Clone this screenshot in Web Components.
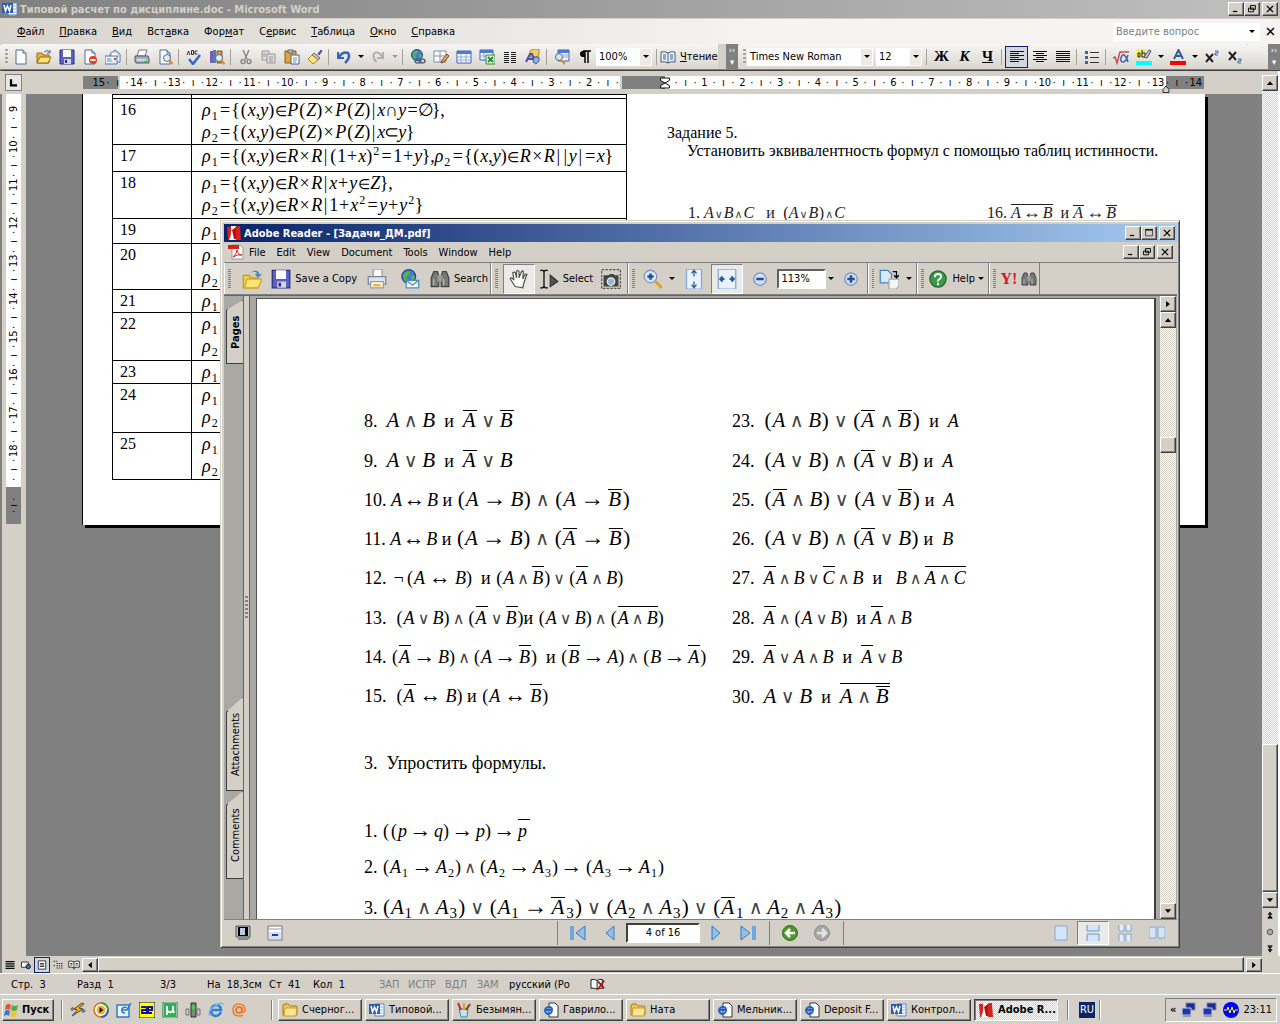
<!DOCTYPE html>
<html lang="ru">
<head>
<meta charset="utf-8">
<title>Типовой расчет по дисциплине.doc - Microsoft Word</title>
<style>
    body {
        margin: 0;
        height: 100vh;
        display: flex;
        flex-direction: column;
        overflow: hidden;
        background: #808080;
        color: #000;
        font: 11px "DejaVu Sans Condensed", "DejaVu Sans", sans-serif;
        --face: #d4d0c8;
    }
    word-window { flex: 1; min-height: 0; }
</style>
</head>
<body>
<word-window></word-window>
<task-bar>
    <task-button icon="folder">Счерног...</task-button>
    <task-button icon="word">Типовой...</task-button>
    <task-button icon="paint">Безымян...</task-button>
    <task-button icon="iepage">Гаврило...</task-button>
    <task-button icon="folder">Ната</task-button>
    <task-button icon="iepage">Мельник...</task-button>
    <task-button icon="iepage">Deposit F...</task-button>
    <task-button icon="word">Контрол...</task-button>
    <task-button icon="adobe" active>Adobe R...</task-button>
</task-bar>
<reader-window></reader-window>

<script>
// every icon sits on a 16 x 16 grid
const sheet = '<path d="M3 1h7l3 3v11H3z" fill="#fff" stroke="#4a6a98"/><path d="M10 1v3h3" fill="#cfe0f5" stroke="#4a6a98"/>';
const lens = '<circle cx="10" cy="9" r="3.5" fill="#d8efff" stroke="#667"/><path d="M12.500 11.500l3 3.500" stroke="#d98c2b" stroke-width="2"/>';
const globe = '<circle cx="7" cy="6" r="5.500" fill="#3f7fc8" stroke="#1d4c85"/><path d="M3 4q2-3 5-2l-1 3-2 1 1 3-2 1q-2-3-1-6zM9 5l3 1-1 3-2-1z" fill="#58b548"/>';
const icons = {
    word: '<path d="M6 2h9v12H6z" fill="#fff" stroke="#5b84c4"/><path d="M11 5h3M11 8h3M8 14h6M11 11h3" stroke="#8fb0e0"/><path d="M0 2h11v10H0z" fill="#2a5cb0"/><path d="M2 4l1.500 6 2-5 2 5L9 4" fill="none" stroke="#fff" stroke-width="1.500"/>',
    new: sheet,
    open: '<path d="M1 14V4h5l1 2h6v8z" fill="#e7b13c" stroke="#9a6b13"/><path d="M1 14l3-6h11l-3 6z" fill="#ffdf7a" stroke="#9a6b13"/><path d="M8 3q3-3 6 0m0-2v3h-3" fill="none" stroke="#3b6fb6"/>',
    ropen: '<path d="M1 15V5h5l1 2h6v8z" fill="#f6cf48" stroke="#c69a1c"/><path d="M2 15l2-7h12l-3 7z" fill="#ffe474" stroke="#d0a52a"/><path d="M7 3q5-4 7 1h2l-3 3-3-3h2q-1-3-5-1z" fill="#4d88bf"/>',
    save: '<path d="M1 1h14v14H1z" fill="#5a63c2" stroke="#2b2f80"/><path d="M4 1h8v7H4z" fill="#fff"/><path d="M5 10h7v5H5z" fill="#cfd3ee"/><path d="M6 11h2v3H6z" fill="#2b2f80"/>',
    perm: sheet + '<circle cx="11" cy="11" r="4" fill="#e0401f"/><path d="M8.500 11h5" stroke="#fff" stroke-width="2"/>',
    mail: '<path d="M5 5l5-4 5 4v8H5z" fill="#fff" stroke="#4f78b5"/><path d="M6 3h7v5H6z" fill="#fff" stroke="#9a9a9a"/><path d="M0 7h12v8H0z" fill="#e7f1fc" stroke="#4f78b5"/><path d="M2 10h4M2 12h5" stroke="#6b8cc0"/><path d="M9 9h2v2H9z" fill="#d8452e"/>',
    print: '<path d="M5 1h8l-2 6H3z" fill="#fff" stroke="#777"/><path d="M1 7h13l1 3v4H2l-1-2z" fill="#a7b1c0" stroke="#4e5664"/><path d="M3 11h9" stroke="#fff"/><path d="M10 12h3v2h-3z" fill="#3db53a"/>',
    preview: sheet + lens,
    spell: '<path d="M1 6l1.500-4L4 6M5.500 1.500v4h2v-4zM11.500 2H9v3h2.500" fill="none" stroke="#333"/><path d="M3 10l4 5 7-9" fill="none" stroke="#3569c8" stroke-width="2.500"/>',
    research: '<path d="M1 2h3v12H1z" fill="#7a5bb5"/><path d="M4 1h3v13H4z" fill="#4b7dc9"/><path d="M8 2h5v12H8z" fill="#c79b55" stroke="#7d5a22"/>' + lens,
    cut: '<path d="M5 1l4 9M11 1L7 10" stroke="#8a8a8a" stroke-width="1.500"/><circle cx="5" cy="12.500" r="2" fill="none" stroke="#8a8a8a" stroke-width="1.500"/><circle cx="11" cy="12.500" r="2" fill="none" stroke="#8a8a8a" stroke-width="1.500"/>',
    copy: '<path d="M1 2h7v9H1z" fill="#ddd" stroke="#999"/><path d="M6 5h8v9H6z" fill="#ddd" stroke="#999"/><path d="M8 8h4M8 10h4M8 12h4M2 5h3M2 7h3" stroke="#999"/>',
    paste: '<path d="M1 2h11v12H1z" fill="#e2a33b" stroke="#8f5f17"/><path d="M4 1h5v3H4z" fill="#b9bec8" stroke="#666"/><path d="M7 6h8v9H7z" fill="#fff" stroke="#44629a"/><path d="M9 9h4M9 11h4M9 13h3" stroke="#6f90cc"/>',
    brush: '<path d="M11 5l3-4 1 1-3 4z" fill="#6a5acd" stroke="#4a3f9a"/><path d="M7 4l6 5-2 2-6-5z" fill="#c0c6d0" stroke="#666"/><path d="M5 6l6 5-5 4-5-5z" fill="#ffe680" stroke="#a8841f"/>',
    undo: '<path d="M2 3v6h6" fill="none" stroke="#3564b8" stroke-width="2"/><path d="M3 8q4-6 9-4 3 4-3 10" fill="none" stroke="#3564b8" stroke-width="2.500"/>',
    redo: '<path d="M13 3v6H7" fill="none" stroke="#b0b0b0" stroke-width="2"/><path d="M12.500 8q-4-6-8-4-3 4 2 9" fill="none" stroke="#b0b0b0" stroke-width="2"/>',
    link: globe + '<path d="M5 12q0-2 3-2t3 2-3 2-3-2zM9 12q0-2 3-2t3 2-3 2-3-2z" fill="none" stroke="#56657e" stroke-width="1.500"/>',
    borders: '<path d="M1 2h12v11H1zM7 2v11M1 7h12" fill="#fff" stroke="#7d8fb0"/><path d="M8 14l1-3 5-6 2 2-5 6z" fill="#e8a34a" stroke="#7a4a1a"/>',
    table: '<path d="M1 2h14v12H1z" fill="#fff" stroke="#3a62b0"/><path d="M1 2h14v3H1z" fill="#4a7bd0"/><path d="M1 8h14M1 11h14M5 5v9M10 5v9" stroke="#88a6dc"/>',
    excel: '<path d="M1 1h13v10H1z" fill="#fff" stroke="#3a62b0"/><path d="M1 1h13v3H1z" fill="#4a7bd0"/><path d="M1 7h13M5 4v7" stroke="#88a6dc"/><path d="M7 6h9v9H7z" fill="#e9f6e6" stroke="#2b8a32"/><path d="M9 8l5 5M14 8l-5 5" stroke="#2b8a32" stroke-width="2"/>',
    columns: '<path d="M2 3.500h5M2 5.500h5M2 7.500h5M2 9.500h5M2 11.500h5M2 13.500h5M9 3.500h5M9 5.500h5M9 7.500h5M9 9.500h5M9 11.500h5M9 13.500h5" stroke="#222"/>',
    draw: '<path d="M5 2l3-2h6v6l-3 2H5z" fill="#f5cf62" stroke="#b08420"/><path d="M1 13L5 5h2l3 8M3 10h5" fill="none" stroke="#4a4fb8" stroke-width="2"/><path d="M9 8h5v4l-3 3-3-2z" fill="#8fb1e8" stroke="#3c5b9a"/>',
    docmap: '<path d="M4 1h11v11H4z" fill="#eaf3ff" stroke="#3a62b0"/><path d="M4 1h11v3H4z" fill="#4a7bd0"/><path d="M9 6h5M9 8h5" stroke="#9ab"/><circle cx="5" cy="8" r="3.500" fill="#cdeafa" stroke="#667"/><path d="M7 11l4 4" stroke="#d98c2b" stroke-width="2"/>',
    para: '<path d="M8 2v12M11 2v12M6 2h8" stroke="#000" stroke-width="1.500"/><path d="M8 2H6q-3 0-3 3t3 3h2z"/>',
    book: '<path d="M1 3q4-1 7 1 3-2 7-1v10q-4-1-7 1-3-2-7-1z" fill="#eef4fb" stroke="#3c5b88"/><path d="M8 4v10M3 6h3M3 8h3M3 10h3M10 6h3M10 8h3M10 10h3" stroke="#3c5b88"/>',
    left: '<path d="M1 2.500h14M1 4.500h9M1 6.500h14M1 8.500h9M1 10.500h14M1 12.500h9" stroke="#111"/>',
    center: '<path d="M1 2.500h14M4 4.500h8M1 6.500h14M4 8.500h8M1 10.500h14M4 12.500h8" stroke="#111"/>',
    justify: '<path d="M1 2.500h14M1 4.500h14M1 6.500h14M1 8.500h14M1 10.500h14M1 12.500h14" stroke="#111"/>',
    bullets: '<path d="M6 3.500h9M6 8.500h9M6 13.500h9" stroke="#333"/><path d="M1 2h3v3H1zM1 7h3v3H1zM1 12h3v3H1z" fill="#3a62b0"/>',
    root: '<path d="M0 9l2-1 2 6L7 3h9" fill="none" stroke="#d04848" stroke-width="1.500"/><path d="M15 6q-2 7-5 7t-2-4 3-3 4 7" fill="none" stroke="#3564b8" stroke-width="1.500"/>',
    marker: '<path d="M0 0h10v9H0z" fill="#f4f06a"/><path d="M2 4h2v4H2zM6 1v7h3V4H6" fill="none" stroke="#222"/><path d="M8 8l5-7 2 1-4 7z" fill="#b8c4d8" stroke="#556"/><path d="M0 12h16v4H0z" fill="#0ff"/>',
    color: '<path d="M4 10L8.500 1 13 10M6 7h5" fill="none" stroke="#3a5a9a" stroke-width="2"/><path d="M0 12h16v4H0z" fill="#f00"/>',
    sup: '<path d="M2 5l7 8M9 5l-7 8" stroke="#222" stroke-width="2"/><path d="M11 2h3v2h-3v2h3" fill="none" stroke="#3564b8"/>',
    sub: '<path d="M2 3l7 8M9 3l-7 8" stroke="#222" stroke-width="2"/><path d="M11 10h3v2h-3v2h3" fill="none" stroke="#3564b8"/>',
    adobe: '<path d="M1 2l13-1 1 14H2z" fill="#d8201c"/><path d="M5 1h5L8 9l2 6H3q3-6 2-14z" fill="#fff"/><path d="M6 5l4-3v12H8z" fill="#b01512"/>',
    pdf: '<path d="M4 1h8l3 3v11H4z" fill="#fff" stroke="#999"/><path d="M0 1h11v4H0z" fill="#d8201c"/><path d="M5 13q4-4 4-7 1 5 5 5-5-1-9 2z" fill="none" stroke="#d8201c"/>',
    folder: '<path d="M1 13V4q0-2 2-2h3l2 2h6q1 0 1 1v8z" fill="#f3c84c" stroke="#a87a15"/><path d="M3 6h12l-1 8H2z" fill="#ffe692" stroke="#c79a2a"/>',
    rprint: '<path d="M5 0h7v6H5z" fill="#fff" stroke="#99a"/><path d="M1 6h14v6H1z" fill="#dfe4ec" stroke="#7c8595"/><path d="M3 10h10v5H3z" fill="#fff" stroke="#99a"/><path d="M5 12h6v2H5z" fill="#f0b637"/>',
    rmail: globe + '<path d="M5 9h10v6H5z" fill="#f6fbff" stroke="#4f8cc0"/><path d="M5 9l5 4 5-4" fill="none" stroke="#4f8cc0"/>',
    binoc: '<path d="M3 2h3l1 4v8H1V7zM10 2h3l2 5v7H9V6z" fill="#777" stroke="#444"/><path d="M6 5h4v5H6z" fill="#999"/><path d="M3 8v5M11 8v5" stroke="#bbb"/>',
    hand: '<path d="M5 14L1 8q1-2 3 1L3 3q1-1 2 0l1 4V2q1-2 2 0v5l2-5q1-1 1.500 0L11 8l2-4q2 0 1 1l-2 6-1 4z" fill="#fff" stroke="#555"/>',
    select: '<path d="M1 1h2l1 1 1-1h2M4 2v12M1 15h2l1-1 1 1h2" fill="none" stroke="#000"/><path d="M9 5l6 5-6 4z" fill="#555" stroke="#333"/>',
    camera: '<path d="M.500.500h15v15H.500z" fill="none" stroke="#555" stroke-dasharray="2 1"/><path d="M3 5h3l1-1h3l1 1h3v9H2V5z" fill="#444"/><circle cx="8" cy="10" r="3" fill="#9ab4cc" stroke="#eee"/>',
    zoomin: '<circle cx="6" cy="6" r="5" fill="#d6e8fb" stroke="#8093b8"/><path d="M6 3.500v5M3.500 6h5" stroke="#1f4f9a" stroke-width="2"/><path d="M10 10l5 5" stroke="#dfa032" stroke-width="2.500"/>',
    fith: '<path d="M2 0h12v16H2z" fill="#e8f3ff" stroke="#7fa8d8"/><path d="M8 1v5M8 10v5M6 3.500L8 1l2 2.500M6 12.500L8 15l2-2.500" fill="none" stroke="#2a5b9a"/>',
    fitw: '<path d="M1 0h14v16H1z" fill="#e8f3ff" stroke="#7fa8d8"/><path d="M2 8h4M10 8h4M4.500 6l-2 2 2 2M11.500 6l2 2-2 2" fill="none" stroke="#2a5b9a" stroke-width="1.500"/>',
    minus: '<circle cx="8" cy="8" r="5" fill="#cfe0f7" stroke="#7f8fb5"/><path d="M5 8h6" stroke="#1f4f9a" stroke-width="2"/>',
    plus: '<circle cx="8" cy="8" r="5" fill="#cfe0f7" stroke="#7f8fb5"/><path d="M5 8h6M8 5v6" stroke="#1f4f9a" stroke-width="2"/>',
    rotate: '<path d="M1 1h6l3 3v7H1z" fill="#d8e9fb" stroke="#4f7fc0"/><path d="M8 8h8v5l-2 3H8z" fill="#f5f5f5" stroke="#aaa"/><path d="M11 2h3v5M12 5l2 2 2-2" fill="none" stroke="#000"/>',
    help: '<circle cx="8" cy="8" r="6.500" fill="#3a9a4a" stroke="#23652d"/><path d="M5.500 6.500q0-2.500 2.500-2.500t2.500 2Q10.500 7.500 8 9v1M8 11v2" fill="none" stroke="#fff" stroke-width="1.500"/>',
    play: '<circle cx="8" cy="8" r="7" fill="#fff" stroke="#e06a1c" stroke-width="1.500"/><path d="M8 1a7 7 0 0 1 7 7" fill="none" stroke="#3fa047" stroke-width="2"/><path d="M15 8a7 7 0 0 1-7 7" fill="none" stroke="#2c62c8" stroke-width="2"/><circle cx="8" cy="8" r="4.500" fill="#f0b030"/><path d="M6.500 5l4 3-4 3z" fill="#123"/>',
    winamp: '<path d="M12 1l-8 6 3 1-5 6 11-7-4-1 5-4z" fill="#f8a81c" stroke="#444"/><path d="M1 8l3-2M12 10l3-2" stroke="#777" stroke-width="3"/>',
    desk: '<path d="M1 3h12v12H1z" fill="#e8f4ff" stroke="#2f7ac8" stroke-width="1.500"/><path d="M11 6q-3-2-5 1-1 4 3 4M6 8h5l4-7" fill="none" stroke="#2f7ac8" stroke-width="1.500"/>',
    ae: '<path d="M0 0h16v16H0z" fill="#ff0" stroke="#000080"/><path d="M2 5h4q2 0 2 2v4H3V8h10V5H9v6h4" fill="none" stroke="#1010a0" stroke-width="2"/>',
    mu: '<path d="M1 0h14v16H1z" fill="#fff" stroke="#197a3c"/><path d="M2 1h12v14H2z" fill="#2fae5a"/><path d="M5 4v9M5 9q5 3 6-1V4M11 8l1 3" fill="none" stroke="#fff" stroke-width="2"/>',
    phone: '<path d="M6 1h5v14H6z" fill="#7c8a80" stroke="#333"/><path d="M7 4h3v3H7z" fill="#52d24a"/><path d="M1 7h3v6H1zM12 7h3v6h-3z" fill="#c5ccd0" stroke="#777"/>',
    ie: '<path d="M13 10q-2 4-6 4-4-1-4-6 1-5 6-5 4 1 4 5H4" fill="none" stroke="#2c7fd8" stroke-width="2.500"/><path d="M2 14Q-1 9 7 4q8-5 8-1" fill="none" stroke="#6fb6f2" stroke-width="1.500"/>',
    at: '<circle cx="8" cy="8" r="3" fill="none" stroke="#f07a28" stroke-width="2"/><path d="M11 5v5q3 1 3-2 0-6-6-6-6 0-6 6t6 6q3 0 4-1" fill="none" stroke="#f07a28" stroke-width="1.500"/>',
    iepage: '<path d="M6 1h6l3 3v11H6z" fill="#fff" stroke="#333"/><path d="M9 9q-1 3-4 3-3-1-3-4 1-3 4-3 3 0 3 3H3" fill="none" stroke="#2463c8" stroke-width="2"/>',
    paint: '<path d="M3 7h9l-1 8H5z" fill="#bfe6ee" stroke="#3a8a99"/><path d="M5 8L2 1" stroke="#d02a20" stroke-width="2"/><path d="M8 8V1" stroke="#e0a020" stroke-width="2"/><path d="M10 8l4-6" stroke="#8a3a1a" stroke-width="2"/>',
    flag: '<path d="M2 3q3-2 5 0L6 8Q4 6 1 8z" fill="#e8502a"/><path d="M8 3q3 2 6 0l-1 5q-3 2-6 0z" fill="#4fae3c"/><path d="M1 9q3-2 5 0l-1 5q-2-2-5 0z" fill="#3a78d8"/><path d="M7 9q3 2 6 0l-1 5q-3 2-6 0z" fill="#f7c22c"/>',
    net: '<path d="M5 1h9v7H5z" fill="#1a2f9a" stroke="#889"/><path d="M1 6h9v7H1z" fill="#2038b0" stroke="#ccd"/><path d="M2 14h8" stroke="#99a" stroke-width="2"/>',
    wave: '<circle cx="8" cy="8" r="8" fill="#00f"/><path d="M1 8h3l1-3 2 6 2-6 2 6 1-3h3" fill="none" stroke="#ff0"/>',
    monitor: '<path d="M1 1h14v11H1z" fill="#bbb" stroke="#555"/><path d="M3 2h10v9H3z" fill="#000"/><path d="M5 3h5v7H5z" fill="#b8cbe0"/><path d="M3 14h10" stroke="#888" stroke-width="2"/><path d="M13 12h2v2h-2z" fill="#2c2"/>',
    collapse: '<path d="M1 1h14v14H1z" fill="#fff" stroke="#778"/><path d="M1 4h14" stroke="#99a"/><path d="M2 7h12v7H2z" fill="#d6e0f2"/><path d="M5 10h6" stroke="#1f3f9a" stroke-width="2"/>',
    first: '<path d="M0 1h4v14H0z" fill="#6fa8dc"/><path d="M15 1v14L6 8z" fill="#8fc0ee" stroke="#3d78b4"/>',
    prev: '<path d="M12 1v14L4 8z" fill="#8fc0ee" stroke="#3d78b4"/>',
    next: '<path d="M4 1v14l8-7z" fill="#8fc0ee" stroke="#3d78b4"/>',
    last: '<path d="M12 1h4v14h-4z" fill="#6fa8dc"/><path d="M1 1v14l9-7z" fill="#8fc0ee" stroke="#3d78b4"/>',
    back: '<circle cx="8" cy="8" r="7.500" fill="#4f9a2c" stroke="#2f6a18"/><path d="M13 8H5M8 4L4 8l4 4" fill="none" stroke="#fff" stroke-width="2.500"/>',
    fwd: '<circle cx="8" cy="8" r="7.500" fill="#a8a8a8" stroke="#888"/><path d="M3 8h8M8 4l4 4-4 4" fill="none" stroke="#e4e4e4" stroke-width="2.500"/>',
    single: '<path d="M2 1h12v14H2z" fill="#d3e5fa" stroke="#86a8d4"/>',
    cont: '<path d="M2 0v6h12V0M2 16V9h12v7" fill="#d3e5fa" stroke="#6f93c4"/>',
    contface: '<path d="M2 0v6h5V0M9 0v6h5V0M2 16V9h5v7M9 16V9h5v7" fill="#e3effc" stroke="#86a8d4"/>',
    facing: '<path d="M0 2h7v11H0zM9 2h7v11H9z" fill="#d3e5fa" stroke="#86a8d4"/>',
    vnormal: '<path d="M2 3.500h12M2 6.500h12M2 9.500h12M2 12.500h12" stroke="#000" stroke-width="1.500"/>',
    vweb: '<path d="M2 4h9v7H2z" fill="#fff" stroke="#000"/><circle cx="11" cy="10" r="3" fill="#37a" stroke="#000"/>',
    vprint: '<path d="M3 2.500h10v11H3z" fill="#fff" stroke="#000"/><path d="M5 6h6M5 8h6M5 10h6" stroke="#000"/>',
    voutline: '<path d="M2 3h6M6 6h8M2 9h2M6 9h8M6 12h8" stroke="#000" stroke-dasharray="2 1"/>',
    vread: '<path d="M1 3q4-1 7 1 3-2 7-1v8q-4-1-7 1-3-2-7-1z" fill="#fff" stroke="#000"/><path d="M8 4v10M3 6h3M10 6h3M3 8h3M10 8h3" stroke="#000"/>',
    spellbook: '<path d="M0 3q4-1 7 1 2-2 6-1v10q-4-1-6 1-3-2-7-1z" fill="#fff" stroke="#000"/><path d="M7 4v10" stroke="#000"/><path d="M8 5l7 8M15 4l-7 10" stroke="#b01010" stroke-width="2"/>',
    min: '<path d="M3 12h7" stroke="#000" stroke-width="2"/>',
    max: '<path d="M2.500 2.500h11v10h-11z" fill="none" stroke="#000"/><path d="M2 3h12" stroke="#000" stroke-width="2"/>',
    restore: '<path d="M5.500 2.500h8v6h-8zM2.500 6.500h8v6h-8z" fill="#d4d0c8" stroke="#000" stroke-width="1.500"/>',
    close: '<path d="M3 3l10 10M13 3L3 13" stroke="#000" stroke-width="2"/>',
    up: '<path d="M8 5l5 6H3z"/>', down: '<path d="M8 11l5-6H3z"/>',
    lt: '<path d="M5 8l6-5v10z"/>', rt: '<path d="M11 8L5 3v10z"/>',
    twoup: '<path d="M8 1l4 5H4zM8 6l4 5H4z"/><path d="M4 12h8" stroke="#000"/>',
    twodown: '<path d="M8 15l4-5H4zM8 10l4-5H4z"/><path d="M4 4h8" stroke="#000"/>',
    dot: '<circle cx="8" cy="8" r="4.500" fill="#aaa" stroke="#222"/>',
    tabstop: '<path d="M4 3v8h8" fill="none" stroke="#000" stroke-width="3"/>',
    indent: '<path d="M1 0h14v4L8 8l7 4v4H1v-4l7-4-7-4z" fill="#fff" stroke="#000" stroke-width="1.500"/>',
    margin: '<path d="M2 15V9l6-7 6 7v6z" fill="#d4d0c8" stroke="#000" stroke-width="1.500"/>'
};

const common = `
    * { box-sizing: border-box; }
    button, select, input {
        margin: 0; padding: 0; border: 0; background: none;
        font: inherit; color: inherit; border-radius: 0;
    }
    select { appearance: none; outline: none; }
    .row { display: flex; align-items: center; }
    .grow { flex: 1; min-width: 0; }
    .raised {
        background: var(--face);
        border: 1px solid; border-color: #fff #404040 #404040 #fff;
        box-shadow: inset -1px -1px #808080;
    }
    .track { background: repeating-conic-gradient(#fff 0 25%, #d4d0c8 0 50%) 0 0 / 2px 2px; }
`;

class UiIcon extends HTMLElement {
    constructor() {
        super();
        this.attachShadow({mode: 'open'});
    }
    connectedCallback() {
        this.shadowRoot.innerHTML = `
            <style>
                :host { display: block; flex: none; width: 16px; height: 16px; }
                svg { display: block; width: 100%; height: 100%; }
            </style>
            <svg viewBox="0 0 16 16" aria-hidden="true">${icons[this.getAttribute('name')] || ''}</svg>`;
    }
}
customElements.define('ui-icon', UiIcon);

// flat toolbar button; "drop" adds the little arrow, "pressed" and "sunken" the held-down looks
class ToolButton extends HTMLElement {
    constructor() {
        super();
        this.attachShadow({mode: 'open'});
    }
    connectedCallback() {
        const drop = this.hasAttribute('drop');
        this.shadowRoot.innerHTML = `
            <style>${common}
                :host { display: flex; flex: none; align-items: center; }
                button { display: flex; align-items: center; justify-content: center; gap: 4px; min-width: 23px; height: 22px; white-space: nowrap; }
                :host([size="big"]) button { min-width: 28px; height: 30px; }
                :host([size="big"]) ui-icon { width: 20px; height: 20px; }
                :host([size="foot"]) button { min-width: 32px; height: 24px; }
                :host([size="small"]) button { min-width: 16px; height: 16px; }
                :host([size="small"]) ui-icon { width: 12px; height: 12px; }
                :host([pressed]) button { background: #d2d6df; border: 1px solid #0a246a; }
                :host([sunken]) button { min-width: 32px; background: #eceae6; border: 1px solid; border-color: #808080 #fff #fff #808080; }
                :host .drop { min-width: 11px; width: 11px; }
                :host([size="big"]) .drop { min-width: 11px; }
                .drop i { border: 3px solid transparent; border-top-color: currentColor; border-bottom: 0; }
                :host([off]) .drop { color: #999; }
            </style>
            <button aria-label="${this.getAttribute('icon')}"><ui-icon name="${this.getAttribute('icon')}"></ui-icon><slot></slot></button>
            ${drop ? '<button class="drop" aria-label="more"><i></i></button>' : ''}`;
    }
}
customElements.define('tool-button', ToolButton);

// raised square used in title bars and scroll bars
class PushButton extends HTMLElement {
    constructor() {
        super();
        this.attachShadow({mode: 'open'});
    }
    connectedCallback() {
        this.shadowRoot.innerHTML = `
            <style>${common}
                :host { display: block; flex: none; }
                button { display: flex; align-items: center; justify-content: center; width: 16px; height: 14px; }
                :host([square]) button { height: 16px; }
                ui-icon { width: 10px; height: 10px; }
            </style>
            <button class="raised" aria-label="${this.getAttribute('icon')}"><ui-icon name="${this.getAttribute('icon')}"></ui-icon></button>`;
    }
}
customElements.define('push-button', PushButton);

class ComboBox extends HTMLElement {
    constructor() {
        super();
        this.attachShadow({mode: 'open'});
    }
    connectedCallback() {
        this.shadowRoot.innerHTML = `
            <style>${common}
                :host { display: flex; flex: none; align-items: center; height: 18px; background: #fff; }
                select { flex: 1; min-width: 0; height: 18px; padding-left: 3px; }
                i { width: 11px; height: 16px; background: #ece9e4; display: grid; place-items: center; margin-right: 1px; }
                i::after { content: ""; border: 3px solid transparent; border-top-color: #000; border-bottom: 0; }
            </style>
            <select aria-label="${this.getAttribute('label')}"><option>${this.getAttribute('value')}</option></select><i></i>`;
    }
}
customElements.define('combo-box', ComboBox);

// Formula notation: [..] overline, «..» larger type, _ a space, ^2 power, digit after a letter = index
const signs = {
    '∧': 'and', '∨': 'and', '→': 'arrow', '↔': 'iff', '~': 'tight', '¬': 'not',
    '=': 'rel', '∈': 'rel in', '×': 'rel', '∩': 'rel', '⊂': 'rel', '∅': 'rel', '+': 'add',
    '|': 'bar', '(': 'open', ')': 'close', '{': 'brace', '}': 'brace'
};
function formulaHtml(src) {
    let html = '';
    let letter = false;
    for (let k = 0; k < src.length; k++) {
        const c = src[k];
        if (c === '[') html += '<span class="over">';
        else if (c === ']') { html += '</span>'; continue; }
        else if (c === '«') html += '<span class="big">';
        else if (c === '»') html += '</span>';
        else if (c === '_') html += '&nbsp;';
        else if (c === '^') html += `<sup>${src[++k]}</sup>`;
        else if (signs[c]) html += `<span class="op ${signs[c]}">${c === '~' ? '↔' : c}</span>`;
        else if (/[A-Za-zρ]/.test(c)) html += `<i>${c}</i>`;
        else if (/\d/.test(c) && letter) html += `<sub>${c}</sub>`;
        else html += c;
        letter = /[A-Za-zρ]/.test(c);
    }
    return html;
}
class LogicFormula extends HTMLElement {
    constructor() {
        super();
        this.attachShadow({mode: 'open'});
    }
    connectedCallback() {
        this.shadowRoot.innerHTML = `
            <style>
                :host { display: block; white-space: nowrap; font: 18px "Liberation Serif", serif; line-height: 24px; }
                .big { font-size: 21px; }
                .over { display: inline-block; line-height: 22px; border-top: 1px solid; min-width: 12px; }
                .big .over { line-height: 19px; min-width: 14px; }
                .over:has(.over) { padding-top: 2px; }
                sub, sup { display: inline-block; font-size: 12px; line-height: 8px; width: 8px; text-align: center; vertical-align: -4px; }
                sup { vertical-align: 7px; }
                .big sub { font-size: 15px; width: 9px; }
                .op { display: inline-flex; justify-content: center; line-height: 14px; width: 18px; }
                .and { font-family: "DejaVu Sans", sans-serif; font-size: 16px; color: #444; }
                .big .and { font-size: 19px; width: 23px; }
                .arrow { width: 27px; font-size: 22px; }
                .big .arrow { width: 32px; font-size: 24px; }
                .iff { width: 30px; font-size: 22px; }
                .tight { width: 25px; font-size: 22px; }
                .not { width: 15px; }
                .rel { width: 13px; }
                .in { font-size: 14px; }
                .add { width: 12px; }
                .bar { width: 7px; }
                .brace, .open { width: 8px; }
                .close { width: 6px; }
                .big .open { width: 9px; }
                .big .close { width: 8px; }
                :host([scan]) { font-size: 16px; line-height: 18px; color: #222; }
                :host([scan]) .op { width: 6px; }
                :host([scan]) .and { font-size: 11px; width: 10px; }
                :host([scan]) .iff { width: 22px; font-size: 18px; }
                :host([scan]) .over { line-height: 14px; min-width: 11px; }
            </style>${formulaHtml(this.getAttribute('src'))}`;
    }
}
customElements.define('logic-formula', LogicFormula);

function cells(numbers) {
    return numbers.map((n, k) => k && n === 14 && numbers[0] === ''
        ? `<span class="cm"><b>${n}</b></span>`
        : `<span class="cm"><b>${n}</b><b>·</b><b>ı</b><b>·</b></span>`).join('');
}
const count = (a, b) => Array.from({length: Math.abs(b - a) + 1}, (_, k) => a < b ? a + k : a - k);

class WordRuler extends HTMLElement {
    constructor() {
        super();
        this.attachShadow({mode: 'open'});
        this.shadowRoot.innerHTML = `
            <style>${common}
                :host { display: grid; grid-template-columns: 83px 1121px; align-items: center; height: 23px; background: var(--face); }
                .corner { width: 17px; height: 17px; margin-left: 5px; display: grid; place-items: center; border: 1px solid #808080; background: #e9e7e2; }
                .corner ui-icon { width: 12px; height: 12px; }
                .bands, .scale, .marks { grid-area: 1 / 2; display: flex; height: 13px; }
                .bands span { background: #808080; }
                .bands .w { background: #fff; }
                .scale { padding-left: 11px; }
                .left, .right { display: flex; flex: none; }
                .left { width: 528px; }
                .right { width: 567px; margin-left: 40px; }
                .cm { flex: 1 0 0; display: grid; grid-template-columns: repeat(4, 1fr); line-height: 13px; }
                .cm b { font-weight: normal; display: flex; justify-content: center; width: 100%; min-width: 0; }
                .marks { height: 20px; padding-left: 577px; justify-content: space-between; align-items: stretch; margin-right: 33px; }
                .marks ui-icon { width: 10px; height: 20px; }
                .marks ui-icon + ui-icon { height: 8px; align-self: end; }
            </style>
            <div class="corner"><ui-icon name="tabstop"></ui-icon></div>
            <div class="bands">
                <span style="flex:0 0 35px"></span><span class="w" style="flex:0 0 500px;margin:0 2px"></span>
                <span style="flex:0 0 43px"></span><span class="w" style="flex:0 0 501px"></span><span class="grow"></span>
            </div>
            <div class="scale"><div class="left">${cells(count(15, 2))}</div><div class="right">${cells(['', ...count(1, 14)])}</div></div>
            <div class="marks"><ui-icon name="indent"></ui-icon><ui-icon name="margin"></ui-icon></div>`;
    }
}
customElements.define('word-ruler', WordRuler);

const tasks = [
    [16, ['ρ1={(x,y)∈P(Z)×P(Z)|x∩y=∅},', 'ρ2={(x,y)∈P(Z)×P(Z)|x⊂y}'], 46],
    [17, ['ρ1={(x,y)∈R×R|(1+x)^2=1+y},ρ2={(x,y)∈R×R||y|=x}'], 27],
    [18, ['ρ1={(x,y)∈R×R|x+y∈Z},', 'ρ2={(x,y)∈R×R|1+x^2=y+y^2}'], 47],
    [19, ['ρ1'], 25], [20, ['ρ1', 'ρ2'], 46], [21, ['ρ1'], 23], [22, ['ρ1', 'ρ2'], 48],
    [23, ['ρ1'], 23], [24, ['ρ1', 'ρ2'], 49], [25, ['ρ1', 'ρ2'], 47]
];

class WordPage extends HTMLElement {
    constructor() {
        super();
        this.attachShadow({mode: 'open'});
        this.shadowRoot.innerHTML = `
            <style>${common}
                :host {
                    display: grid; grid-template-columns: 555px 1fr; align-content: start;
                    height: 431px; padding-left: 29px; overflow: hidden;
                    background: #fff; border-left: 1px solid #000;
                    box-shadow: 3px 3px #000; font: 16px "Liberation Serif", serif;
                }
                table { width: 515px; border-collapse: collapse; table-layout: fixed; }
                td { border: 1px solid #000; padding: 0 0 0 7px; vertical-align: top; line-height: 22px; }
                td + td { padding-left: 10px; }
                td:first-child { width: 79px; }
                logic-formula { line-height: 22px; }
                h2 { margin: 30px 0 0; font: inherit; line-height: 18px; }
                p { margin: 0 0 42px 20px; line-height: 18px; white-space: nowrap; }
                .scans { display: grid; grid-template-columns: 299px 1fr; margin-left: 21px; }
            </style>
            <table>
                <tr style="height:4px"><td></td><td></td></tr>
                ${tasks.map(([n, rows, h]) => `<tr style="height:${h}px"><td>${n}</td><td>${rows.map(r => `<logic-formula src="${r}"></logic-formula>`).join('')}</td></tr>`).join('')}
            </table>
            <div>
                <h2>Задание 5.</h2>
                <p>Установить эквивалентность формул с помощью таблиц истинности.</p>
                <div class="scans">
                    <logic-formula scan src="1._A∨B∧C___и__(A∨B)∧C"></logic-formula>
                    <logic-formula scan src="16._[A↔B]__и_[A]↔[B]"></logic-formula>
                </div>
            </div>`;
    }
}
customElements.define('word-page', WordPage);

class WordWindow extends HTMLElement {
    constructor() {
        super();
        this.attachShadow({mode: 'open'});
        const tool = list => list.split(' ').map(n => {
            if (n === '/') return '<span class="sep"></span>';
            const [icon, ...flags] = n.split(':');
            return `<tool-button icon="${icon}" ${flags.join(' ')}></tool-button>`;
        }).join('');
        this.shadowRoot.innerHTML = `
            <style>${common}
                :host { display: flex; flex-direction: column; background: var(--face); }
                .title { height: 18px; gap: 2px; padding: 0 2px; background: linear-gradient(90deg, #808080, #c0c0c0); color: #d4d0c8; font-weight: bold; flex: none; }
                .pair { display: flex; }
                .menu { height: 26px; flex: none; border-top: 1px solid var(--face); background: linear-gradient(90deg, #d8d4cc, #f5f4f2 60%); padding: 0 4px 0 17px; }
                .menu button { margin-right: 15px; }
                .ask { width: 147px; height: 18px; background: #fff; margin-right: 5px; padding-right: 5px; }
                .ask input { flex: 1; min-width: 0; padding-left: 3px; outline: 0; color: #808080; }
                .ask i { border: 3px solid transparent; border-top-color: #000; border-bottom: 0; }
                .tools { height: 26px; flex: none; background: var(--face); border-bottom: 1px solid #808080; overflow: hidden; }
                .strip { height: 25px; background: linear-gradient(#f7f6f4, #d9d6cf); border-radius: 3px 0 0 3px; }
                .grip { width: 3px; height: 16px; margin: 0 1px 0 5px; background: repeating-linear-gradient(#a8a49c 0 2px, transparent 2px 4px); flex: none; }
                .sep { width: 1px; height: 16px; margin: 0 3px 0 2px; background: #a6a29a; flex: none; }
                .end { width: 12px; height: 25px; background: #808080; color: #fff; font-size: 9px; line-height: 12px; text-align: center; flex: none; }
                .fmt { min-width: 23px; height: 22px; font: bold 15px "Liberation Serif", serif; }
                .work { flex: 1; min-height: 0; display: grid; grid-template-columns: 24px 1fr 18px; border-left: 2px solid #808080; border-top: 1px solid #404040; grid-template-rows: 23px 1fr; }
                word-ruler { grid-column: 1 / 3; margin-left: -2px; }
                .vruler { width: 15px; margin-left: 4px; display: flex; flex-direction: column; }
                .vruler div { writing-mode: vertical-rl; transform: rotate(180deg); background: #fff; display: flex; flex-direction: row-reverse; height: 393px; line-height: 15px; padding-bottom: 10px; }
                .vruler .cm { flex: 0 0 38px; display: flex; flex-direction: row-reverse; }
                .vruler b { font-weight: normal; display: flex; justify-content: center; flex: 1 1 0; min-height: 0; }
                .vruler .g { background: #808080; height: 37px; justify-content: center; padding: 0; }
                .desk { background: #808080; padding: 0 57px 0 56px; overflow: hidden; }
                .vbar { display: flex; flex-direction: column; align-items: center; grid-column: 3; grid-row: 1 / 3; border-right: 2px solid #fff; padding-top: 4px; }
                .vbar .track { flex: 1; width: 16px; display: flex; flex-direction: column; justify-content: flex-end; }
                .thumb { height: 148px; }
                .nav { display: grid; height: 48px; align-content: space-around; }
                .nav ui-icon { width: 10px; height: 10px; }
                .hbar { flex: none; height: 17px; padding: 1px 18px 1px 0; border-left: 2px solid #808080; }
                .hbar .raised { height: 15px; margin-right: 2px; }
                .status { flex: none; height: 22px; border-top: 1px solid #fff; border-bottom: 1px solid #fff; white-space: nowrap;
                    display: grid; align-items: center; padding-left: 11px;
                    grid-template-columns: 66px 83px 47px 62px 44px 66px 29px 37px 32px 32px 79px 1fr; }
                .off { color: #808080; }
                .status ui-icon { width: 20px; height: 14px; }
            </style>
            <div class="title row"><ui-icon name="word"></ui-icon><span class="grow">Типовой расчет по дисциплине.doc - Microsoft Word</span>
                <div class="pair"><push-button icon="min"></push-button><push-button icon="restore"></push-button></div><push-button icon="close"></push-button></div>
            <div class="menu row">
                ${['<u>Ф</u>айл', '<u>П</u>равка', '<u>В</u>ид', 'Вст<u>а</u>вка', 'Фор<u>м</u>ат', 'С<u>е</u>рвис', '<u>Т</u>аблица', '<u>О</u>кно', '<u>С</u>правка'].map(t => `<button>${t}</button>`).join('')}
                <span class="grow"></span>
                <label class="ask row"><input value="Введите вопрос" aria-label="Введите вопрос"><i></i></label>
                <ui-icon name="close" style="width:11px;height:11px"></ui-icon>
            </div>
            <div class="tools row">
                <div class="strip row"><span class="grip"></span>
                    ${tool('new open save perm mail / print preview / spell research / cut copy paste brush / undo:drop redo:drop:off / link borders table excel columns draw / docmap para')}
                    <combo-box label="Масштаб" value="100%" style="width:56px"></combo-box><span class="sep" style="margin-left:4px"></span>
                    <tool-button icon="book"><span><u>Ч</u>тение</span></tool-button>
                </div>
                <span class="grow"></span>
                <div class="end">››<br>▾</div>
                <div class="strip row"><span class="grip"></span>
                    <combo-box label="Шрифт" value="Times New Roman" style="width:126px"></combo-box>
                    <combo-box label="Размер" value="12" style="width:46px;margin-left:3px"></combo-box><span class="sep" style="margin-left:4px"></span>
                    <button class="fmt">Ж</button><button class="fmt"><i>К</i></button><button class="fmt"><u>Ч</u></button><span class="sep"></span>
                    ${tool('left:pressed center justify / bullets / root marker:drop color:drop sup sub')}
                </div>
                <div class="strip" style="width:22px"></div>
                <div class="end">››<br>▾</div>
            </div>
            <div class="work">
                <word-ruler></word-ruler>
                <div class="vruler"><div>${cells(count(9, 18))}</div><div class="g">· ı ·</div></div>
                <div class="desk"><word-page></word-page></div>
                <div class="vbar"><push-button square icon="up"></push-button>
                    <div class="track"><div class="thumb raised"></div></div>
                    <push-button square icon="down"></push-button>
                    <div class="nav"><ui-icon name="twoup"></ui-icon><ui-icon name="dot"></ui-icon><ui-icon name="twodown"></ui-icon></div></div>
            </div>
            <div class="hbar row">
                ${['vnormal', 'vweb', 'vprint', 'voutline', 'vread'].map(n => `<tool-button size="small" icon="${n}" ${n === 'vprint' ? 'pressed' : ''}></tool-button>`).join('')}
                <push-button icon="lt"></push-button><div class="raised grow"></div><push-button icon="rt"></push-button>
            </div>
            <div class="status"><span>Стр.&nbsp; 3</span><span>Разд&nbsp; 1</span><span>3/3</span><span>На&nbsp; 18,3см</span><span>Ст&nbsp; 41</span><span>Кол&nbsp; 1</span>
                <span class="off">ЗАП</span><span class="off">ИСПР</span><span class="off">ВДЛ</span><span class="off">ЗАМ</span><span>русский (Ро</span><ui-icon name="spellbook"></ui-icon></div>`;
    }
}
customElements.define('word-window', WordWindow);

const listA = [
    '8.__«A∧B»__и__«[A]∨[B]»', '9.__«A∨B»__и__«[A]∨B»',
    '10._A~B_и_«(A→B)∧(A→[B])»', '11._A~B_и_«(A→B)∧([A]→[B])»',
    '12._¬(A↔B)__и_(A∧[B])∨([A]∧B)', '13.__(A∨B)∧([A]∨[B])и_(A∨B)∧([A∧B])',
    '14._([A]→B)∧(A→[B])__и_([B]→A)∧(B→[A])', '15.__([A]↔B)_и_(A↔[B])'
];
const listB = [
    '23.__«(A∧B)∨([A]∧[B])»__и__A', '24.__«(A∨B)∧([A]∨B)»_и__A',
    '25.__«([A]∧B)∨(A∨[B])»_и__A', '26.__«(A∨B)∧([A]∨B)»_и__B',
    '27.__[A]∧B∨[C]∧B__и___B∧[A∧C]', '28.__[A]∧(A∨B)__и_[A]∧B',
    '29.__[A]∨A∧B__и__[A]∨B', '30.__«A∨B»__и__«[A∧[B]]»'
];

class ReaderWindow extends HTMLElement {
    constructor() {
        super();
        this.attachShadow({mode: 'open'});
        const f = s => `<logic-formula src="${s}"></logic-formula>`;
        const foot = (...names) => names.map(n => `<tool-button size="foot" icon="${n}" ${n === 'cont' ? 'sunken' : ''}></tool-button>`).join('');
        this.shadowRoot.innerHTML = `
            <style>${common}
                :host {
                    position: absolute; inset: 220px 100px 76px 220px;
                    display: flex; flex-direction: column; padding: 2px; background: var(--face);
                    border: 1px solid; border-color: var(--face) #404040 #404040 var(--face);
                    box-shadow: inset 1px 1px #fff, inset -1px -1px #808080; overflow: hidden;
                }
                .title { height: 18px; flex: none; margin-top: 1px; padding: 0 2px; gap: 2px; margin-left: 1px; background: linear-gradient(90deg, #0a246a, #a6caf0); color: #fff; font-weight: bold; }
                .pair { display: flex; }
                .menu { height: 20px; flex: none; padding: 0 4px 0 5px; gap: 2px; }
                .menu button { margin-left: 3px; margin-right: 6px; }
                .tools { height: 33px; flex: none; border-top: 1px solid #808080; border-bottom: 1px solid #808080; margin-left: 1px; }
                .group { display: flex; align-items: center; justify-content: space-between; height: 31px; border-right: 1px solid #808080; border-left: 1px solid #fff; padding: 0 2px 0 1px; flex: none; }
                .grip { width: 3px; height: 20px; margin: 0 1px 0 2px; background: repeating-linear-gradient(#808080 0 1px, transparent 1px 2px); }
                .pct { width: 49px; height: 20px; background: #fff; border: 2px solid; border-color: #606060 #fff #fff #606060; padding-left: 3px; }
                .caret { border: 3px solid transparent; border-top-color: #000; border-bottom: 0; }
                .yahoo { color: #e01020; font: bold 16px "Liberation Serif", serif; }
                .body { flex: 1; min-height: 0; display: grid; grid-template-columns: 20px 6px 1fr 21px; margin-left: 1px; background: #a9a8a3; border-top: 1px solid #666; }
                .tabs { display: flex; flex-direction: column; border-right: 1px solid #666; padding: 4px 0 40px 2px; }
                .tabs button { writing-mode: vertical-rl; transform: rotate(180deg); width: 17px; background: linear-gradient(to bottom right, var(--face) 91%, #404040 91%) var(--face); border: 1px solid #404040; border-left: 0; clip-path: polygon(0 0, 100% 0, 100% 84%, 0 100%); }
                .split { background: var(--face); display: grid; align-content: center; border-right: 1px solid #666; }
                .split i { height: 24px; background: repeating-linear-gradient(#808080 0 2px, transparent 2px 4px); margin: 0 1px; }
                .paper { background: #fff; margin: 2px 0 0 6px; border-left: 1px solid #555; border-top: 1px solid #555; border-right: 2px solid #404040; overflow: hidden; padding: 102px 0 0 107px; font: 18px "Liberation Serif", serif; }
                .lists { display: grid; grid-template-columns: 368px 1fr; }
                .lists > div, .more { display: grid; align-items: center; }
                .lists > div { height: 315px; grid-auto-rows: 1fr; }
                h3 { font: inherit; line-height: 40px; margin: 27px 0 30px; white-space: pre; }
                .more { grid-template-rows: 36px 36px 44px; }
                .scroll { display: flex; flex-direction: column; width: 16px; margin-left: 4px; }
                .scroll .track { flex: 1; padding-top: 109px; }
                .knob { height: 16px; }
                .foot { height: 26px; flex: none; border-top: 1px solid #808080; margin-left: 1px; padding: 0 4px 0 3px; display: grid; grid-template-columns: 1fr auto 1fr; align-items: center; }
                .foot .row:last-child { justify-content: end; }
                .page { width: 74px; height: 20px; border: 2px solid; border-color: #404040 #fff #fff #404040; background: #fff; text-align: center; }
                .sep { width: 1px; height: 24px; background: #808080; margin: 0 4px 0 5px; }
            </style>
            <div class="title row"><ui-icon name="adobe"></ui-icon><span class="grow">Adobe Reader - [Задачи_ДМ.pdf]</span>
                <div class="pair"><push-button icon="min"></push-button><push-button icon="max"></push-button></div><push-button icon="close"></push-button></div>
            <div class="menu row"><ui-icon name="pdf"></ui-icon>
                ${['File', 'Edit', 'View', 'Document', 'Tools', 'Window', 'Help'].map(t => `<button>${t}</button>`).join('')}<span class="grow"></span>
                <div class="pair"><push-button icon="min"></push-button><push-button icon="restore"></push-button></div><push-button icon="close"></push-button></div>
            <div class="tools row">
                <div class="group" style="width:267px"><span class="grip"></span><tool-button size="big" icon="ropen"></tool-button><tool-button size="big" icon="save">Save a Copy</tool-button>
                    <tool-button size="big" icon="rprint"></tool-button><tool-button size="big" icon="rmail"></tool-button><tool-button size="big" icon="binoc">Search</tool-button></div>
                <div class="group" style="width:137px"><span class="grip"></span><tool-button size="big" icon="hand" sunken></tool-button><tool-button size="big" icon="select">Select</tool-button><tool-button size="big" icon="camera"></tool-button></div>
                <div class="group" style="width:240px"><span class="grip"></span><tool-button size="big" icon="zoomin" drop></tool-button><tool-button size="big" icon="fith"></tool-button><tool-button size="big" icon="fitw" sunken></tool-button><tool-button size="big" icon="minus"></tool-button>
                    <input class="pct" value="113%" aria-label="Zoom"><i class="caret"></i><tool-button size="big" icon="plus"></tool-button></div>
                <div class="group" style="width:49px"><span class="grip"></span><tool-button size="big" icon="rotate" drop></tool-button></div>
                <div class="group" style="width:72px"><span class="grip"></span><tool-button size="big" icon="help" drop>Help</tool-button></div>
                <div class="group" style="width:51px"><span class="grip"></span><b class="yahoo">Y!</b><ui-icon name="binoc"></ui-icon></div>
            </div>
            <div class="body">
                <div class="tabs"><button style="height:64px;font-weight:bold">Pages</button><span class="grow"></span>
                    <button style="height:94px">Attachments</button><button style="height:88px">Comments</button></div>
                <div class="split"><i></i></div>
                <div class="paper">
                    <div class="lists"><div>${listA.map(f).join('')}</div><div>${listB.map(f).join('')}</div></div>
                    <h3>3.  Упростить формулы.</h3>
                    <div class="more">${['1._((p→q)→p)→[p]', '2._(A1→A2)∧(A2→A3)→(A3→A1)', '3._«(A1∧A3)∨(A1→[A]3)∨(A2∧A3)∨([A]1∧A2∧A3)»'].map(f).join('')}</div>
                </div>
                <div class="scroll"><push-button square icon="rt"></push-button><push-button square icon="up"></push-button>
                    <div class="track"><div class="knob raised"></div></div><push-button square icon="down"></push-button></div>
            </div>
            <div class="foot">
                <div class="row">${foot('monitor', 'collapse')}</div>
                <div class="row"><span class="sep"></span>${foot('first', 'prev')}<input class="page" value="4 of 16" aria-label="Page">${foot('next', 'last')}
                    <span class="sep"></span>${foot('back', 'fwd')}<span class="sep"></span></div>
                <div class="row">${foot('single', 'cont', 'contface', 'facing')}</div>
            </div>`;
    }
}
customElements.define('reader-window', ReaderWindow);

class TaskButton extends HTMLElement {
    constructor() {
        super();
        this.attachShadow({mode: 'open'});
    }
    connectedCallback() {
        this.shadowRoot.innerHTML = `
            <style>${common}
                :host { display: block; width: 84px; flex: none; }
                button { width: 100%; height: 22px; display: flex; align-items: center; gap: 4px; padding: 0 3px; white-space: nowrap; }
                :host([active]) button { font-weight: bold; border-color: #404040 #fff #fff #404040; box-shadow: inset 1px 1px #808080;
                    background: repeating-conic-gradient(#fff 0 25%, #d4d0c8 0 50%) 0 0 / 2px 2px; }
            </style>
            <button class="raised"><ui-icon name="${this.getAttribute('icon')}"></ui-icon><slot></slot></button>`;
    }
}
customElements.define('task-button', TaskButton);

class TaskBar extends HTMLElement {
    constructor() {
        super();
        this.attachShadow({mode: 'open'});
        this.shadowRoot.innerHTML = `
            <style>${common}
                :host { display: flex; align-items: center; height: 29px; flex: none; background: var(--face); padding: 0 3px 0 2px; }
                .start { width: 52px; height: 22px; display: flex; align-items: center; gap: 2px; padding: 0 1px; font-weight: bold; }
                .bar { width: 2px; height: 20px; border-left: 1px solid #808080; border-right: 1px solid #fff; flex: none; }
                .quick { display: flex; width: 208px; padding-left: 3px; }
                .tasks { display: flex; gap: 3px; flex: 1; padding-left: 5px; min-width: 0; }
                .lang { width: 16px; height: 16px; margin: 0 4px 0 10px; background: #0a246a; color: #fff; display: grid; place-items: center; }
                .tray { height: 24px; margin-left: 64px; width: 112px; padding: 0 4px; display: flex; align-items: center; justify-content: space-between; border: 1px solid; border-color: #808080 #fff #fff #808080; }
            </style>
            <button class="start raised"><ui-icon name="flag"></ui-icon>Пуск</button>
            <span class="bar" style="margin-left:7px"></span>
            <div class="quick">${['winamp', 'play', 'desk', 'ae', 'mu', 'phone', 'ie', 'at'].map(n => `<tool-button icon="${n}"></tool-button>`).join('')}</div>
            <span class="bar"></span>
            <div class="tasks"><slot></slot></div>
            <span class="bar"></span><span class="lang">RU</span><span class="bar"></span>
            <div class="tray"><b>«</b><ui-icon name="net"></ui-icon><ui-icon name="net"></ui-icon><ui-icon name="wave"></ui-icon><time>23:11</time></div>`;
    }
}
customElements.define('task-bar', TaskBar);
</script>
</body>
</html>
